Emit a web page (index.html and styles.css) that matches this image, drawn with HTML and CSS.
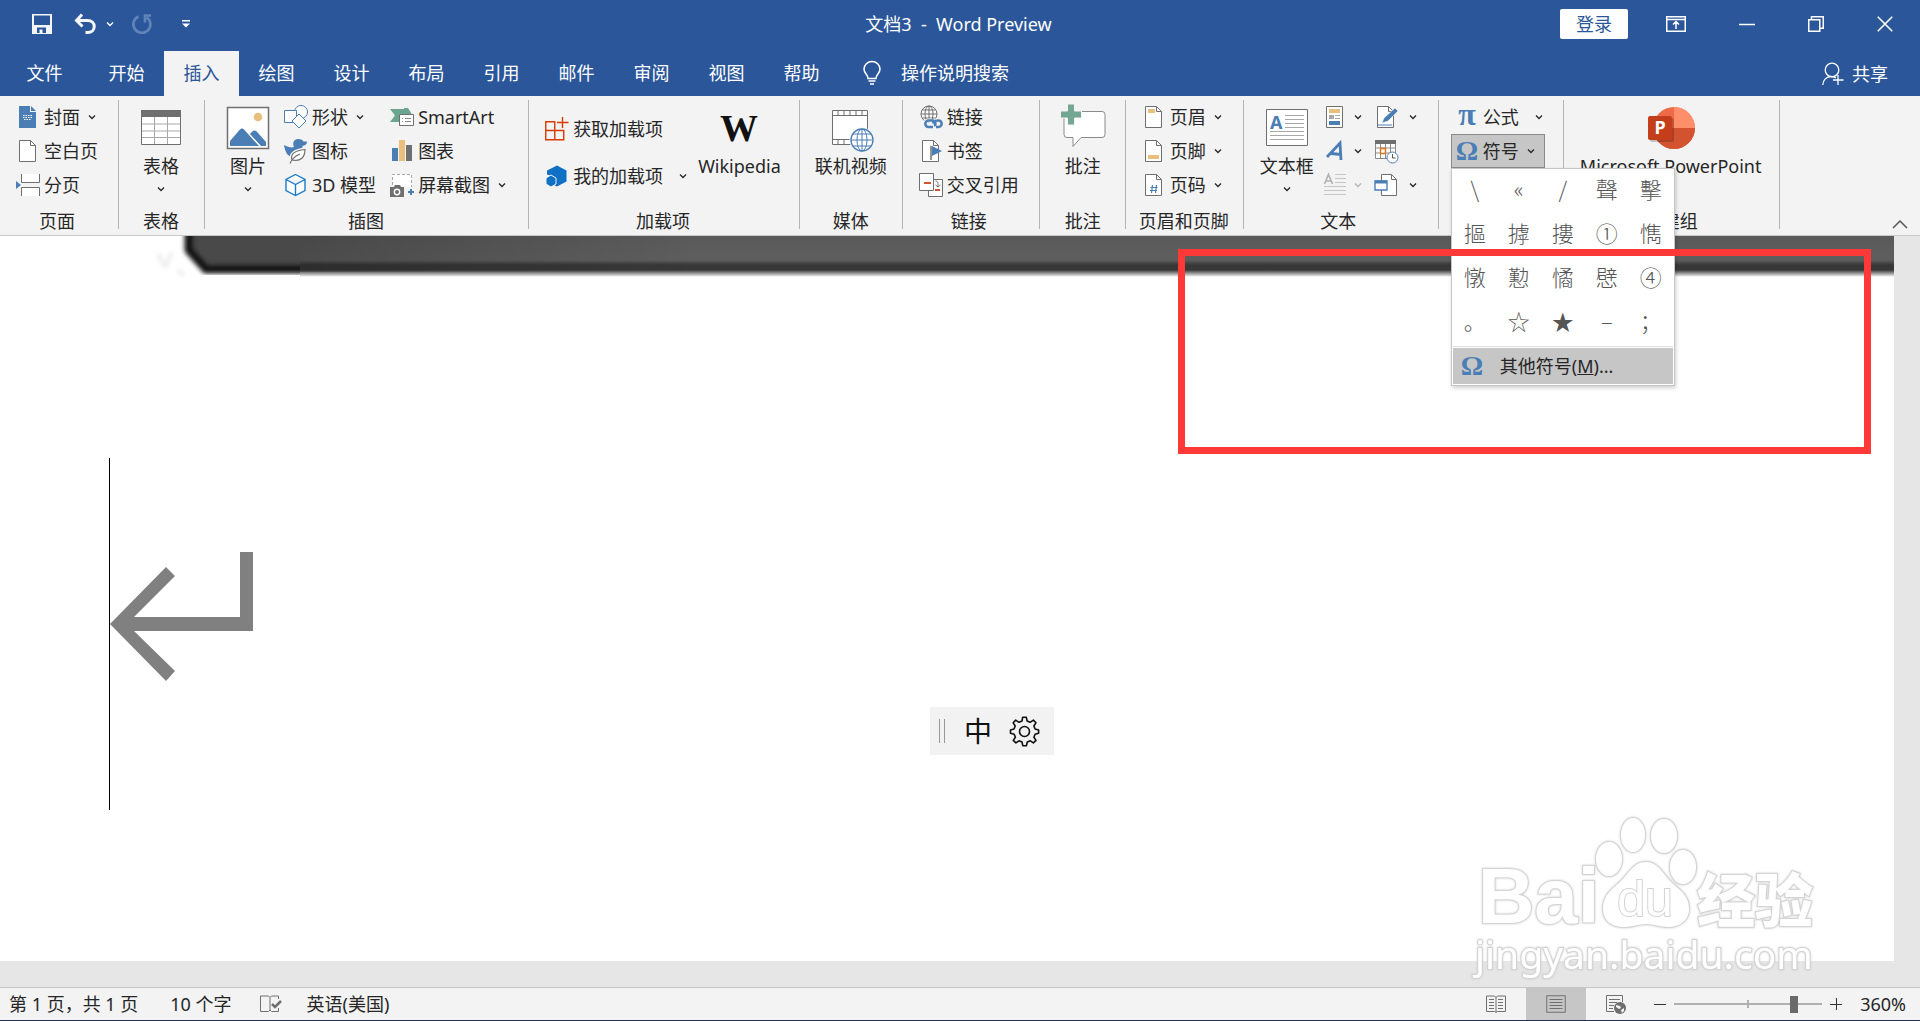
FILE: index.html
```
<!DOCTYPE html>
<html lang="zh-CN">
<head>
    <meta charset="UTF-8">
    <meta name="viewport" content="width=device-width, initial-scale=1.0">
    <title>文档3 - Word Preview</title>
    <link rel="stylesheet" href="styles.css">
</head>
<body>
    <!-- shared icon shapes -->
    <svg class="defs" aria-hidden="true">
        <symbol id="chev" viewBox="0 0 8 6"><path d="M1 1.5l3 3 3-3" fill="none" stroke="currentColor" stroke-width="1.3"/></symbol>
        <symbol id="page" viewBox="0 0 24 24"><path d="M3.5 1.5h11l5 5v16h-16z" fill="#fff" stroke="#6f6f6f"/><path d="M14.500 1.500v5h5" fill="none" stroke="#6f6f6f"/></symbol>
        <symbol id="omega" viewBox="0 0 24 24"><text x="12" y="21" text-anchor="middle" class="glyph">Ω</text></symbol>
    </svg>

    <header class="top">
        <div class="titlebar">
            <div class="quick">
                <button class="tb" aria-label="保存"><svg width="20" height="20" viewBox="0 0 20 20"><path d="M0 0h20v20H0z" fill="#f4f6fa"/><path d="M2 1.500h16V11H2z" fill="#2b579a"/><path d="M5 13.500h9V19H5z" fill="#2b579a"/><path d="M7.500 15.500h3V19h-3z" fill="#f4f6fa"/></svg></button>
                <button class="tb undo" aria-label="撤消"><svg width="22" height="20" viewBox="0 0 22 20"><path d="M8 0.500L2.500 6.500l6 6M3 6.500h10.500c9 0 9 12 0 12h-2" fill="none" stroke="#f4f6fa" stroke-width="3"/></svg><svg class="chev"><use href="#chev"/></svg></button>
                <button class="tb redo" aria-label="重复"><svg width="20" height="20" viewBox="0 0 20 20"><path d="M6.500 2.500A8.500 8.500 0 1 0 15 3.500M19 1.500h-6v7" fill="none" stroke="#6284b8" stroke-width="2.600"/></svg></button>
                <button class="tb" aria-label="自定义快速访问工具栏"><svg width="8" height="8" viewBox="0 0 8 8"><path d="M0 0h8v1.500H0zM0 3.500h8l-4 4z" fill="#fff"/></svg></button>
            </div>
            <h1 class="doc-title">文档3&nbsp; -&nbsp; Word Preview</h1>
            <div class="window">
                <button class="login">登录</button>
                <button class="tb" aria-label="功能区显示选项"><svg width="20" height="16" viewBox="0 0 20 16"><path d="M.75.75h18.500v14.500H.75zM1 3.500h18M10 13V6M7 8.500l3-3 3 3" fill="none" stroke="#fff" stroke-width="1.500"/></svg></button>
                <button class="tb" aria-label="最小化"><svg width="16" height="16" viewBox="0 0 16 16"><path d="M0 8.500h16" stroke="#fff" stroke-width="1.500"/></svg></button>
                <button class="tb" aria-label="还原"><svg width="16" height="16" viewBox="0 0 16 16"><path d="M.75 3.750h11v11.500h-11zM3.500 3.500V.75h11.750v11.500h-3" fill="none" stroke="#fff" stroke-width="1.500"/></svg></button>
                <button class="tb" aria-label="关闭"><svg width="16" height="16" viewBox="0 0 16 16"><path d="M.75.75l14.500 14.500M15.250.75L.75 15.250" stroke="#fff" stroke-width="1.600"/></svg></button>
            </div>
        </div>
        <nav class="tabs">
            <a class="tab file" href="#">文件</a>
            <a class="tab" href="#">开始</a>
            <a class="tab active" href="#">插入</a>
            <a class="tab" href="#">绘图</a>
            <a class="tab" href="#">设计</a>
            <a class="tab" href="#">布局</a>
            <a class="tab" href="#">引用</a>
            <a class="tab" href="#">邮件</a>
            <a class="tab" href="#">审阅</a>
            <a class="tab" href="#">视图</a>
            <a class="tab" href="#">帮助</a>
            <button class="tell"><svg width="18" height="24" viewBox="0 0 18 24"><path d="M5 17.500c0-4-4-5-4-9.500a8 7.500 0 0 1 16 0c0 4.500-4 5.500-4 9.500zM5.500 20h7M7 23h4" fill="none" stroke="#fff" stroke-width="1.500"/></svg>操作说明搜索</button>
            <button class="share"><svg width="22" height="24" viewBox="0 0 22 24"><circle cx="10" cy="8" r="6.800" fill="none" stroke="#fff" stroke-width="1.300"/><path d="M.8 23c0-5 4-8.500 8-8.500 2 0 4 .5 5 1.500M16 13v10M11 18h10.500" fill="none" stroke="#fff" stroke-width="1.300"/></svg>共享</button>
        </nav>
    </header>

    <section class="ribbon">
        <div class="group">
            <div class="tools">
                <div class="col">
                    <button class="item"><svg class="ic" viewBox="0 0 24 24"><path d="M3 1h11v6h6v16H3z" fill="#4a7eb5"/><path d="M15 1l5 5h-5z" fill="#4a7eb5"/><path d="M7 10.500h10M7 12.500h10M8 14.500h7" stroke="#fff" stroke-dasharray="1.500 1"/></svg>封面<svg class="chev"><use href="#chev"/></svg></button>
                    <button class="item"><svg class="ic"><use href="#page"/></svg>空白页</button>
                    <button class="item"><svg class="ic" viewBox="0 0 24 24"><path d="M0 8v8l5-4z" fill="#4a7eb5"/><path d="M5.500 1v8.500h18V1M5.500 23v-8.500h18V23" fill="#fff" stroke="#6f6f6f"/></svg>分页</button>
                </div>
            </div>
            <div class="name">页面</div>
        </div>

        <div class="group g-table">
            <div class="tools">
                <button class="big"><svg class="lg" viewBox="0 0 44 44"><path d="M2.500 4.500h39v34h-39z" fill="#fff" stroke="#6f6f6f"/><path d="M3 18h38M3 25h38M3 31.500h38M15.500 11v27M28.500 11v27" stroke="#a8a8a8"/><path d="M2 4h40v7H2z" fill="#6f6f6f"/></svg><span>表格</span><svg class="chev"><use href="#chev"/></svg></button>
            </div>
            <div class="name">表格</div>
        </div>

        <div class="group g-illus">
            <div class="tools">
                <button class="big"><svg class="lg" viewBox="0 0 44 44"><path d="M1.500 1.500h41v41h-41z" fill="#fff" stroke="#6f6f6f" stroke-width="1.500"/><circle cx="32" cy="11" r="4.300" fill="#e8bf7c"/><path d="M4 40V35l9.500-11c2-2 3-2 5 0l14.500 16z" fill="#4a7eb5"/><path d="M24 28c3-4 5-5 8-1l8 9v4h-5z" fill="#4a7eb5"/></svg><span>图片</span><svg class="chev"><use href="#chev"/></svg></button>
                <div class="col">
                    <button class="item"><svg class="ic" viewBox="0 0 24 24"><circle cx="17" cy="7" r="6.500" fill="#fff" stroke="#4a7eb5"/><path d="M.5 5.500h12v12H.5z" fill="#fff" stroke="#4a7eb5"/><path d="M15 9l7 7-7 7-7-7z" fill="#fff" stroke="#4a7eb5"/></svg>形状<svg class="chev"><use href="#chev"/></svg></button>
                    <button class="item"><svg class="ic" viewBox="0 0 24 24"><path d="M0 6c4 2 7 3 10 2-2-4 0-8 4-8 3 0 5 1 5.500 2.500H23c0 3-2 4-4.500 4.500 0 7-6 11-10 11C4 18 1 13 0 6z" fill="#4a7eb5"/><path d="M8 22c-3-7 3-11 13.500-12C22 18 18 24 8 22z" fill="#f3f3f3" stroke="#f3f3f3" stroke-width="3"/><path d="M8 21c-2-6 3-9.500 13-10.500C21 18 17 23 8 21zM6 24.500c2-5 5-7.500 10-9.500" fill="#fff" stroke="#6f6f6f" stroke-width="1.200"/></svg>图标</button>
                    <button class="item"><svg class="ic" viewBox="0 0 24 24"><path d="M11.500 1.500l9.500 5v11l-9.500 5-9.500-5v-11zM2 6.500l9.500 5 9.500-5M11.500 11.500v11" fill="#fff" stroke="#1a7bc8" stroke-width="1.400"/></svg>3D 模型</button>
                </div>
                <div class="col">
                    <button class="item"><svg class="ic" viewBox="0 0 24 24"><path d="M0 4h14v-1h4l4 6.500H9V17H0l5-6.500z" fill="#6aa58f"/><path d="M9.500 9.500h14v11h-14z" fill="#fff" stroke="#6f6f6f"/><path d="M12 13.500h1m2 0h6M12 16.500h1m2 0h6" stroke="#8a8a8a"/></svg>SmartArt</button>
                    <button class="item"><svg class="ic" viewBox="0 0 24 24"><path d="M2 9h6v13H2z" fill="#4a7eb5"/><path d="M9 1h6v21H9z" fill="#e8bf7c"/><path d="M16 6h6v16h-6z" fill="#6f6f6f"/></svg>图表</button>
                    <button class="item"><svg class="ic" viewBox="0 0 24 24"><path d="M2.500 12V1.500h19V14" fill="#fff" stroke="#a8a8a8" stroke-dasharray="3 2"/><path d="M0 14h4l1-2h5l1 2h3v10H0z" fill="#6f6f6f"/><circle cx="7" cy="19" r="2.700" fill="none" stroke="#fff" stroke-width="1.400"/><path d="M21 16v6M18 19h6" stroke="#4a7eb5" stroke-width="2"/></svg>屏幕截图<svg class="chev"><use href="#chev"/></svg></button>
                </div>
            </div>
            <div class="name">插图</div>
        </div>

        <div class="group g-addins">
            <div class="tools">
                <div class="col two">
                    <button class="item"><svg class="ic" viewBox="0 0 24 24"><path d="M.75 4.750h9v18h-9zM.75 13.500h18v9.250h-18zM9.750 13.500v9M17.500 0v11M12 5.500h11.500" fill="none" stroke="#d83b01" stroke-width="1.400"/></svg>获取加载项</button>
                    <button class="item mine"><svg class="ic" viewBox="0 0 24 24"><path d="M12 1.500l9.500 5v11l-9.500 5-4-2v-8l-6-2v-4z" fill="#0f70c4"/><path d="M6 11l5 3v6l-5 3-5-3v-6z" fill="#0f70c4" stroke="#f3f3f3"/></svg>我的加载项<svg class="chev"><use href="#chev"/></svg></button>
                </div>
                <button class="big"><svg class="lg" viewBox="0 0 44 44"><text x="22" y="35" text-anchor="middle" class="wiki">W</text></svg><span>Wikipedia</span></button>
            </div>
            <div class="name">加载项</div>
        </div>

        <div class="group g-media">
            <div class="tools">
                <button class="big"><svg class="lg" viewBox="0 0 44 44"><path d="M3.500 4.500h35v34h-35zM3.500 9.500h35M3.500 33.500h35M9 4.500v5m6-5v5m6-5v5m6-5v5m6-5v5M9 33.500v5m6-5v5" fill="#fff" stroke="#6f6f6f"/><circle cx="33" cy="34" r="12.500" fill="#f3f3f3"/><circle cx="33" cy="34" r="11" fill="#fff" stroke="#4a7eb5" stroke-width="1.300"/><ellipse cx="33" cy="34" rx="5" ry="11" fill="none" stroke="#4a7eb5"/><path d="M33 23v22M22 34h22M24 28h18M24 40h18" stroke="#4a7eb5"/></svg><span>联机视频</span></button>
            </div>
            <div class="name">媒体</div>
        </div>

        <div class="group g-links">
            <div class="tools">
                <div class="col">
                    <button class="item"><svg class="ic" viewBox="0 0 24 24"><circle cx="10" cy="9" r="8" fill="#fff" stroke="#6f6f6f"/><ellipse cx="10" cy="9" rx="4" ry="8" fill="none" stroke="#6f6f6f"/><path d="M10 1v16M2 9h16M3.500 5h13M3.500 13h13" stroke="#6f6f6f"/><path d="M14 22.500H9.500a3.500 3.500 0 0 1 0-7H13m2 0h4.500a3.500 3.500 0 0 1 0 7H18M11 21c1-4 6-4 8-2" fill="none" stroke="#f3f3f3" stroke-width="4"/><path d="M14 22H9.500a3.200 3.200 0 0 1 0-6.400h4c3 0 4 4 1.500 5M14 18.500c1-3 2-3 5.500-3a3.200 3.200 0 0 1 0 6.400H17" fill="none" stroke="#4a7eb5" stroke-width="2.500"/></svg>链接</button>
                    <button class="item"><svg class="ic" viewBox="0 0 24 24"><path d="M3.500 1.500h11l5 5v16h-16z" fill="#fff" stroke="#6f6f6f"/><path d="M14.500 1.500v5h5" fill="none" stroke="#6f6f6f"/><path d="M12 7v14" stroke="#6f6f6f" stroke-width="1.500"/><path d="M13 7l10 5-10 5z" fill="#4a7eb5"/></svg>书签</button>
                    <button class="item"><svg class="ic" viewBox="0 0 24 24"><path d="M9.500 6.500h14v17h-14z" fill="#fff" stroke="#6f6f6f"/><path d="M.5.500h14v17H.5z" fill="#fff" stroke="#6f6f6f"/><path d="M5 10h7M16 17h5" stroke="#d35230" stroke-width="2"/><path d="M16.500 8c3 0 2.500 3 2.500 6m-2.500-2l2.500 2 2.500-2" fill="none" stroke="#6f6f6f"/></svg>交叉引用</button>
                </div>
            </div>
            <div class="name">链接</div>
        </div>

        <div class="group g-comment">
            <div class="tools">
                <button class="big"><svg class="lg wide" viewBox="0 0 48 44"><path d="M8 5.500h35q3 0 3 3v20q0 3-3 3H22l-8 9v-9H8q-3 0-3-3v-20q0-3 3-3z" fill="#fff" stroke="#8a8a8a"/><path d="M8.500-2h7v7h7v7h-7v7h-7v-7h-7V5h7z" fill="#73a794" stroke="#f3f3f3"/></svg><span>批注</span></button>
            </div>
            <div class="name">批注</div>
        </div>

        <div class="group g-header">
            <div class="tools">
                <div class="col">
                    <button class="item"><svg class="ic" viewBox="0 0 24 24"><use href="#page"/><path d="M6 4h7v4H6z" fill="#e8bf7c"/></svg>页眉<svg class="chev"><use href="#chev"/></svg></button>
                    <button class="item"><svg class="ic" viewBox="0 0 24 24"><use href="#page"/><path d="M6 16h11v4H6z" fill="#e8bf7c"/></svg>页脚<svg class="chev"><use href="#chev"/></svg></button>
                    <button class="item"><svg class="ic" viewBox="0 0 24 24"><use href="#page"/><path d="M10.500 12l-1 8m5-8l-1 8M8.500 14.500h7M8 17.500h7" stroke="#4a7eb5" stroke-width="1.200"/></svg>页码<svg class="chev"><use href="#chev"/></svg></button>
                </div>
            </div>
            <div class="name">页眉和页脚</div>
        </div>

        <div class="group g-text">
            <div class="tools">
                <button class="big"><svg class="lg" viewBox="0 0 44 44"><path d="M1.500 3.500h41v36h-41z" fill="#fff" stroke="#6f6f6f"/><text x="5" y="23" class="letter">A</text><path d="M20 9.500h19M20 13.500h19M20 17.500h19M20 21.500h19M5 25.500h34M5 29.500h34M5 33.500h34" stroke="#a8a8a8"/></svg><span>文本框</span><svg class="chev"><use href="#chev"/></svg></button>
                <div class="col">
                    <button class="item" aria-label="文档部件"><svg class="ic" viewBox="0 0 24 24"><path d="M4.500 1.500h16v21h-16z" fill="#fff" stroke="#6f6f6f"/><path d="M7 4h11v4H7z" fill="#e8bf7c"/><path d="M7 10h5v4H7z" fill="#a8a8a8"/><path d="M13 10.500h5M13 13.500h5" stroke="#a8a8a8"/><path d="M7 16h11v4H7z" fill="#4a7eb5"/></svg><svg class="chev"><use href="#chev"/></svg></button>
                    <button class="item" aria-label="艺术字"><svg class="ic" viewBox="0 0 24 24"><path d="M5 18L18 4l1 17M9 14.500l10 1" fill="none" stroke="#4a7eb5" stroke-width="2.800"/></svg><svg class="chev"><use href="#chev"/></svg></button>
                    <button class="item off" aria-label="首字下沉" disabled><svg class="ic" viewBox="0 0 24 24"><path d="M2.500 11L6.500 1.500 10.500 11M4 8h5" fill="none" stroke="#b4b4b4" stroke-width="1.700"/><path d="M13 1.500h11M13 5.500h11M13 9.500h11M2 13.500h22M2 17.500h22M2 21.500h22" stroke="#c6c6c6"/></svg><svg class="chev"><use href="#chev"/></svg></button>
                </div>
                <div class="col wide-gap">
                    <button class="item" aria-label="签名行"><svg class="ic" viewBox="0 0 24 24"><use href="#page"/><path d="M4 20h14" stroke="#4a7eb5"/><path d="M8 18l2-5L21 3l3 3-10 10z" fill="#4a7eb5" stroke="#f3f3f3" stroke-width=".6"/></svg><svg class="chev"><use href="#chev"/></svg></button>
                    <button class="item" aria-label="日期和时间"><svg class="ic" viewBox="0 0 24 24"><path d="M1.500 1.500h20v18h-20zM1.500 9h20M1.500 14h20M6.500 5v14M11.500 5v14M16.500 5v14" fill="#fff" stroke="#8a8a8a"/><path d="M1 1h21v4H1z" fill="#6f6f6f"/><path d="M6.500 9.500h5v5h-5z" fill="#fff" stroke="#e8711c" stroke-width="1.400"/><circle cx="18.500" cy="18.500" r="5.500" fill="#fff" stroke="#4a7eb5"/><path d="M18.500 15v4h3" fill="none" stroke="#555"/></svg></button>
                    <button class="item" aria-label="对象"><svg class="ic" viewBox="0 0 24 24"><path d="M7.500 1.500h10l5 5v16h-15z" fill="#fff" stroke="#6f6f6f"/><path d="M17.500 1.500v5h5" fill="none" stroke="#6f6f6f"/><path d="M1 8h12v9H1z" fill="#fff" stroke="#4a7eb5" stroke-width="1.400"/><path d="M1 7.500h12v3H1z" fill="#4a7eb5"/></svg><svg class="chev"><use href="#chev"/></svg></button>
                </div>
            </div>
            <div class="name">文本</div>
        </div>

        <div class="group g-symbol">
            <div class="tools">
                <div class="col">
                    <button class="item formula"><svg class="ic" viewBox="0 0 24 24"><text x="12" y="20" text-anchor="middle" class="glyph pi">π</text></svg>公式<svg class="chev"><use href="#chev"/></svg></button>
                    <div class="anchor">
                        <button class="item pressed" aria-expanded="true"><svg class="ic"><use href="#omega"/></svg>符号<svg class="chev"><use href="#chev"/></svg></button>
                        <div class="menu">
                            <div class="symbols">
                                <button>\</button><button>«</button><button>/</button><button>聲</button><button>擊</button>
                                <button>摳</button><button>摢</button><button>摟</button><button>①</button><button>懏</button>
                                <button>憞</button><button>懃</button><button>憰</button><button>憵</button><button>④</button>
                                <button>。</button><button>☆</button><button>★</button><button>–</button><button>；</button>
                            </div>
                            <button class="more"><svg class="ic"><use href="#omega"/></svg><span>其他符号(<u>M</u>)...</span></button>
                        </div>
                    </div>
                </div>
            </div>
            <div class="name">符号</div>
        </div>

        <div class="group g-ppt">
            <div class="tools">
                <button class="big"><svg class="lg wide" viewBox="0 0 48 44"><circle cx="27" cy="22" r="21" fill="#ed6c47"/><path d="M27 1a21 21 0 0 1 21 21H27z" fill="#ff8f6b"/><path d="M6 22h42a21 21 0 0 1-42 0z" fill="#d35230"/><rect x="3" y="12" width="24" height="24" rx="2" fill="#000" opacity=".2"/><rect x="1" y="10" width="24" height="24" rx="2" fill="#c43e1c"/><text x="13" y="28" text-anchor="middle" class="pp">P</text></svg><span>Microsoft PowerPoint</span></button>
            </div>
            <div class="name">新建组</div>
        </div>

        <button class="collapse" aria-label="折叠功能区"><svg width="16" height="10" viewBox="0 0 16 10"><path d="M1 9l7-7 7 7" fill="none" stroke="#555" stroke-width="1.500"/></svg></button>
    </section>

    <main class="workspace">
        <div class="paper">
            <svg class="picture-left" viewBox="0 0 200 50" width="200" height="50">
                <defs>
                    <filter id="soft" x="-10%" y="-10%" width="120%" height="120%"><feGaussianBlur stdDeviation="2"/></filter>
                </defs>
                <path d="M39-20V14L56 33H240V-20z" fill="#4a4a4a" stroke="#141414" stroke-width="9" stroke-linejoin="round" filter="url(#soft)"/>
                <path d="M8 18l8 14M22 16l-6 14M28 34l6 6" stroke="#ededed" stroke-width="4" filter="url(#soft)"/>
            </svg>
            <div class="picture-edge"></div>
            <svg class="para" viewBox="0 0 146 352" width="146" height="352"><path d="M.5 0v352" stroke="#000"/><path d="M1 166L57 109l9 9-41 41h106V94h13v79H25l41 40-9 10z" fill="#808080"/></svg>
            <div class="ime">
                <svg width="8" height="24" viewBox="0 0 8 24"><path d="M1.500 0v24M6.500 0v24" stroke="#999"/></svg>
                <button>中</button>
                <button aria-label="设置"><svg width="30" height="30" viewBox="0 0 30 30"><path d="M12.700 1.200L12 5l-3 1.300-3.300-2.200-2.500 2.700 2 3.200-1.200 3-3.500.9v3.400l3.700.9 1.200 3-2.100 3.200 2.600 2.500 3.100-2.100 3 1.200.8 3.700h3.600l.9-3.700 3-1.200 3.100 2.100 2.600-2.500-2.100-3.200 1.200-3 3.500-.9v-3.400l-3.500-.9-1.200-3 2-3.200-2.500-2.700L20.100 6.300 17.100 5l-.8-3.800z" fill="none" stroke="#111" stroke-width="1.600" stroke-linejoin="round"/><circle cx="14.500" cy="15.500" r="5" fill="none" stroke="#111" stroke-width="1.600"/></svg></button>
            </div>
        </div>
        <div class="highlight"></div>
        <svg class="watermark" width="360" height="170" viewBox="0 0 360 170">
            <g class="wm-shape">
                <text x="4" y="112" class="wm-bai">Bai</text>
                <ellipse cx="135" cy="48" rx="13" ry="17"/>
                <ellipse cx="159" cy="24" rx="12" ry="17"/>
                <ellipse cx="190" cy="25" rx="13" ry="17"/>
                <ellipse cx="209" cy="56" rx="13" ry="17"/>
                <path d="M172 51c12 0 17 12 25 20 10 9 18 14 18 27 0 12-10 18-21 18-8 0-14-3-22-3s-14 3-22 3c-13 0-21-7-21-18 0-14 9-20 18-28 8-8 13-19 25-19z"/>
                <text x="171" y="105" text-anchor="middle" class="wm-du">du</text>
                <text x="223" y="111" class="wm-cn">经验</text>
                <text x="1" y="158" class="wm-url">jingyan.baidu.com</text>
            </g>
        </svg>
    </main>

    <footer class="status">
        <span>第 1 页，共 1 页</span>
        <span class="words">10 个字</span>
        <button class="tb" aria-label="拼写检查"><svg width="22" height="18" viewBox="0 0 22 18"><path d="M10 2.500L8.500 1H.5v15.500h8L10 15l1.500 1.500h7V13M10 2.500V15M10 2.500L11.500 1h7v3" fill="none" stroke="#6f6f6f"/><path d="M12 9l3 3 6-6" fill="none" stroke="#6f6f6f" stroke-width="2.500"/></svg></button>
        <span class="lang">英语(美国)</span>
        <div class="views">
            <button class="view" aria-label="阅读视图"><svg width="20" height="18" viewBox="0 0 20 18"><path d="M10 2.500L8.500 1H.5v15.500h8L10 17.500l1.500-1h8V1h-8zM10 2v15M3 4.500h5M3 7.500h5M3 10.500h5M3 13.500h5M12 4.500h5M12 7.500h5M12 10.500h5M12 13.500h5" fill="none" stroke="#6f6f6f"/></svg></button>
            <button class="view on" aria-label="页面视图"><svg width="20" height="18" viewBox="0 0 20 18"><path d="M.75.750h18.500v16.500H.75zM3.500 4.500h13M3.500 7.500h13M3.500 10.500h13M3.500 13.500h13" fill="none" stroke="#6f6f6f"/></svg></button>
            <button class="view" aria-label="Web 版式视图"><svg width="20" height="19" viewBox="0 0 20 19"><path d="M8 16.500H.5V.5h16V7M3 4.500h11M3 7.500h8M3 10.500h5M3 13.500h4" fill="none" stroke="#6f6f6f"/><circle cx="14" cy="13" r="6" fill="#6f6f6f"/><path d="M10 10l4 1 1 2-2 1-3-2zM15 15l3-2v3l-2 2z" fill="#f3f3f3"/></svg></button>
        </div>
        <button class="tb" aria-label="缩小"><svg width="12" height="12" viewBox="0 0 12 12"><path d="M0 6.500h12" stroke="#333"/></svg></button>
        <input class="zoom" type="range" min="0" max="100" value="83" aria-label="缩放">
        <button class="tb" aria-label="放大"><svg width="12" height="12" viewBox="0 0 12 12"><path d="M0 6.500h12M6.500 0v12" stroke="#333"/></svg></button>
        <span class="percent">360%</span>
    </footer>
</body>
</html>
```
FILE: styles.css
```
* {
    box-sizing: border-box;
}

body {
    margin: 0;
    min-height: 100vh;
    display: flex;
    flex-direction: column;
    font-family: "Noto Sans", "Noto Sans CJK SC", sans-serif;
    font-size: 18px;
    line-height: 24px;
    color: #262626;
    background: #e6e6e6;
    overflow: hidden;
}

button {
    font: inherit;
    color: inherit;
    background: none;
    border: none;
    padding: 0;
    white-space: nowrap;
}

svg {
    display: block;
    flex: none;
    overflow: visible;
}

.defs {
    position: absolute;
    width: 0;
    height: 0;
}

.chev {
    width: 8px;
    height: 6px;
}

/* title bar and tabs */
.top {
    background: #2b579a;
    color: #fff;
}

.titlebar {
    display: grid;
    grid-template-columns: 1fr auto 1fr;
    align-items: center;
    height: 51px;
    padding: 0 27px 4px 32px;
}

.tb {
    display: flex;
    align-items: center;
}

.quick {
    display: flex;
    align-items: center;
}

.undo {
    gap: 10px;
    margin-left: 22px;
}

.redo {
    margin: 0 30px 0 18px;
}

.doc-title {
    margin: 0;
    padding-right: 8px;
    font-size: 18px;
    font-weight: 400;
}

.window {
    display: flex;
    align-items: center;
    justify-content: flex-end;
    gap: 53px;
}

.login {
    height: 30px;
    padding: 0 16px;
    margin-right: -15px;
    background: #fff;
    color: #2b579a;
    border-radius: 2px;
}

.tabs {
    display: flex;
    height: 45px;
}

.tab {
    width: 75px;
    padding-bottom: 2px;
    display: flex;
    align-items: center;
    justify-content: center;
    color: #fff;
    text-decoration: none;
}

.tab.file {
    width: 89px;
}

.tab.active {
    background: #f3f3f3;
    color: #2b579a;
}

.tell {
    display: flex;
    align-items: center;
    gap: 20px;
    margin-left: 24px;
    padding-bottom: 2px;
}

.share {
    display: flex;
    align-items: center;
    gap: 8px;
    margin: 0 32px 0 auto;
}

/* ribbon */
.ribbon {
    display: flex;
    height: 140px;
    padding: 4px 0 6px;
    background: #f3f3f3;
    border-bottom: 1px solid #c8c8c8;
}

.group {
    display: flex;
    flex-direction: column;
    justify-content: space-between;
    padding: 0 20px 0 16px;
    border-right: 1px solid #b4b4b4;
}

.tools {
    display: flex;
    flex: 1;
}

.name {
    text-align: center;
    line-height: 16px;
    white-space: nowrap;
}

.col {
    display: flex;
    flex-direction: column;
}

.item {
    display: flex;
    align-items: center;
    height: 34px;
    gap: 4px;
}

.item .chev {
    margin-left: 4px;
}

.item.off {
    color: #b4b4b4;
}

.ic {
    width: 24px;
    height: 24px;
}

.big {
    display: flex;
    flex-direction: column;
    align-items: center;
    padding-top: 6px;
}

.big span {
    margin-top: 4px;
}

.big .chev {
    margin-top: 8px;
}

.lg {
    width: 44px;
    height: 44px;
}

.lg.wide {
    width: 48px;
}

.two {
    gap: 13px;
    padding-top: 12px;
}

.g-table {
    padding: 0 21px 0 20px;
}

.g-illus {
    padding: 0 22px 0 21px;
}

.g-illus .tools {
    gap: 14px;
}

.g-addins {
    padding: 0 18px 0 16px;
}

.g-addins .tools {
    gap: 11px;
}

.mine .chev {
    margin-left: 12px;
}

.g-media {
    padding: 0 15px;
}

.g-links {
    padding: 0 20px 0 16px;
}

.g-comment {
    padding: 0 18px 0 19px;
}

.g-header {
    padding: 0 14px 0 13px;
}

.g-header .col {
    padding-left: 3px;
}

.g-text {
    padding: 0 21px 0 16px;
}

.g-text .tools {
    gap: 8px;
}

.g-text .col + .col {
    padding-left: 4px;
}

.g-text .wide-gap .item {
    gap: 7px;
}

.g-symbol {
    padding: 0 18px 0 12px;
}

.g-symbol .item {
    padding-left: 4px;
}

.formula .chev {
    margin-left: 12px;
}

.g-symbol .item.pressed {
    width: 94px;
    background: #c6c6c6;
    border: 1px solid #8a8a8a;
    padding-left: 3px;
}

.g-ppt {
    padding: 0 18px 0 16px;
}

.glyph {
    font: bold 28px "Liberation Serif", serif;
    fill: #4a7eb5;
}

.pi {
    font-size: 32px;
}

.wiki {
    font: bold 38px "Liberation Serif", serif;
    fill: #111;
}

.letter {
    font: bold 18px "Noto Sans", sans-serif;
    fill: #4a7eb5;
}

.pp {
    font: bold 18px "Noto Sans", sans-serif;
    fill: #fff;
}

.collapse {
    align-self: flex-end;
    margin: 0 12px 0 auto;
}

/* symbol drop-down */
.anchor {
    position: relative;
}

.menu {
    position: absolute;
    z-index: 2;
    top: 34px;
    left: 0;
    width: 224px;
    padding: 1px;
    background: #fff;
    border: 1px solid #c6c6c6;
    box-shadow: 1px 2px 4px rgba(0, 0, 0, 0.2);
}

.symbols {
    display: grid;
    grid-template-columns: repeat(5, 44px);
    grid-auto-rows: 44px;
    border-bottom: 1px solid #dcdcdc;
}

.symbols button {
    padding-bottom: 8px;
    font-family: "Noto Sans CJK SC", sans-serif;
    font-size: 22px;
    font-weight: 300;
    line-height: 36px;
    color: #555;
}

.more {
    display: flex;
    align-items: center;
    gap: 16px;
    width: 100%;
    height: 36px;
    margin-top: 1px;
    padding-left: 7px;
    background: #c6c6c6;
}

/* document area */
.workspace {
    position: relative;
    flex: 1;
    display: flex;
    padding: 0 26px 26px 0;
}

.paper {
    position: relative;
    flex: 1;
    background: #fff;
    overflow: hidden;
}

.picture-edge {
    position: absolute;
    top: 0;
    left: 300px;
    right: 0;
    height: 42px;
    background: linear-gradient(to right, rgba(0, 0, 0, 0.2), rgba(0, 0, 0, 0) 400px) 0 0 / 100% 36px no-repeat, linear-gradient(#5a5a5a 0, #5e5e5e 24px, #383838 29px, #383838 34px, #fff 41px);
}

.picture-left {
    position: absolute;
    top: 0;
    left: 150px;
}

.para {
    position: absolute;
    top: 222px;
    left: 109px;
}

.ime {
    position: absolute;
    top: 471px;
    left: 930px;
    display: flex;
    align-items: center;
    gap: 18px;
    height: 48px;
    padding: 0 14px 0 8px;
    background: #f2f2f2;
    font-size: 28px;
    color: #111;
}

.highlight {
    position: absolute;
    z-index: 3;
    top: 13px;
    left: 1178px;
    right: 49px;
    height: 205px;
    border: 7px solid #ff3838;
}

.watermark {
    position: absolute;
    right: 86px;
    bottom: 6px;
}

.wm-shape {
    fill: #fff;
    stroke: #d4d4d4;
    stroke-width: 2px;
    paint-order: stroke;
    filter: drop-shadow(0 0 1px #ccc);
}

.wm-bai {
    font: bold 78px "Liberation Sans", sans-serif;
}

.wm-du {
    font: 50px "Liberation Sans", sans-serif;
}

.wm-cn {
    font: 900 58px "Noto Sans CJK SC", sans-serif;
}

.wm-url {
    font: 39px "Noto Sans", sans-serif;
}

/* status bar */
.status {
    display: flex;
    align-items: center;
    height: 34px;
    padding: 0 14px 0 9px;
    background: #f3f3f3;
    border-top: 1px solid #c6c6c6;
    border-bottom: 1px solid #1f3350;
}

.words {
    margin: 0 28px 0 32px;
}

.lang {
    margin-left: 25px;
}

.views {
    display: flex;
    margin: 0 8px 0 auto;
    align-self: stretch;
}

.view {
    display: flex;
    align-items: center;
    justify-content: center;
    width: 60px;
}

.view.on {
    background: #c6c6c6;
}

.zoom {
    appearance: none;
    width: 148px;
    height: 18px;
    margin: 0 8px;
    background: linear-gradient(#b0b0b0, #b0b0b0) center / 100% 2px no-repeat, linear-gradient(#b0b0b0, #b0b0b0) center / 2px 8px no-repeat;
}

.zoom::-webkit-slider-thumb {
    appearance: none;
    width: 8px;
    height: 17px;
    background: #6a6a6a;
}

.percent {
    margin-left: 18px;
}
```
